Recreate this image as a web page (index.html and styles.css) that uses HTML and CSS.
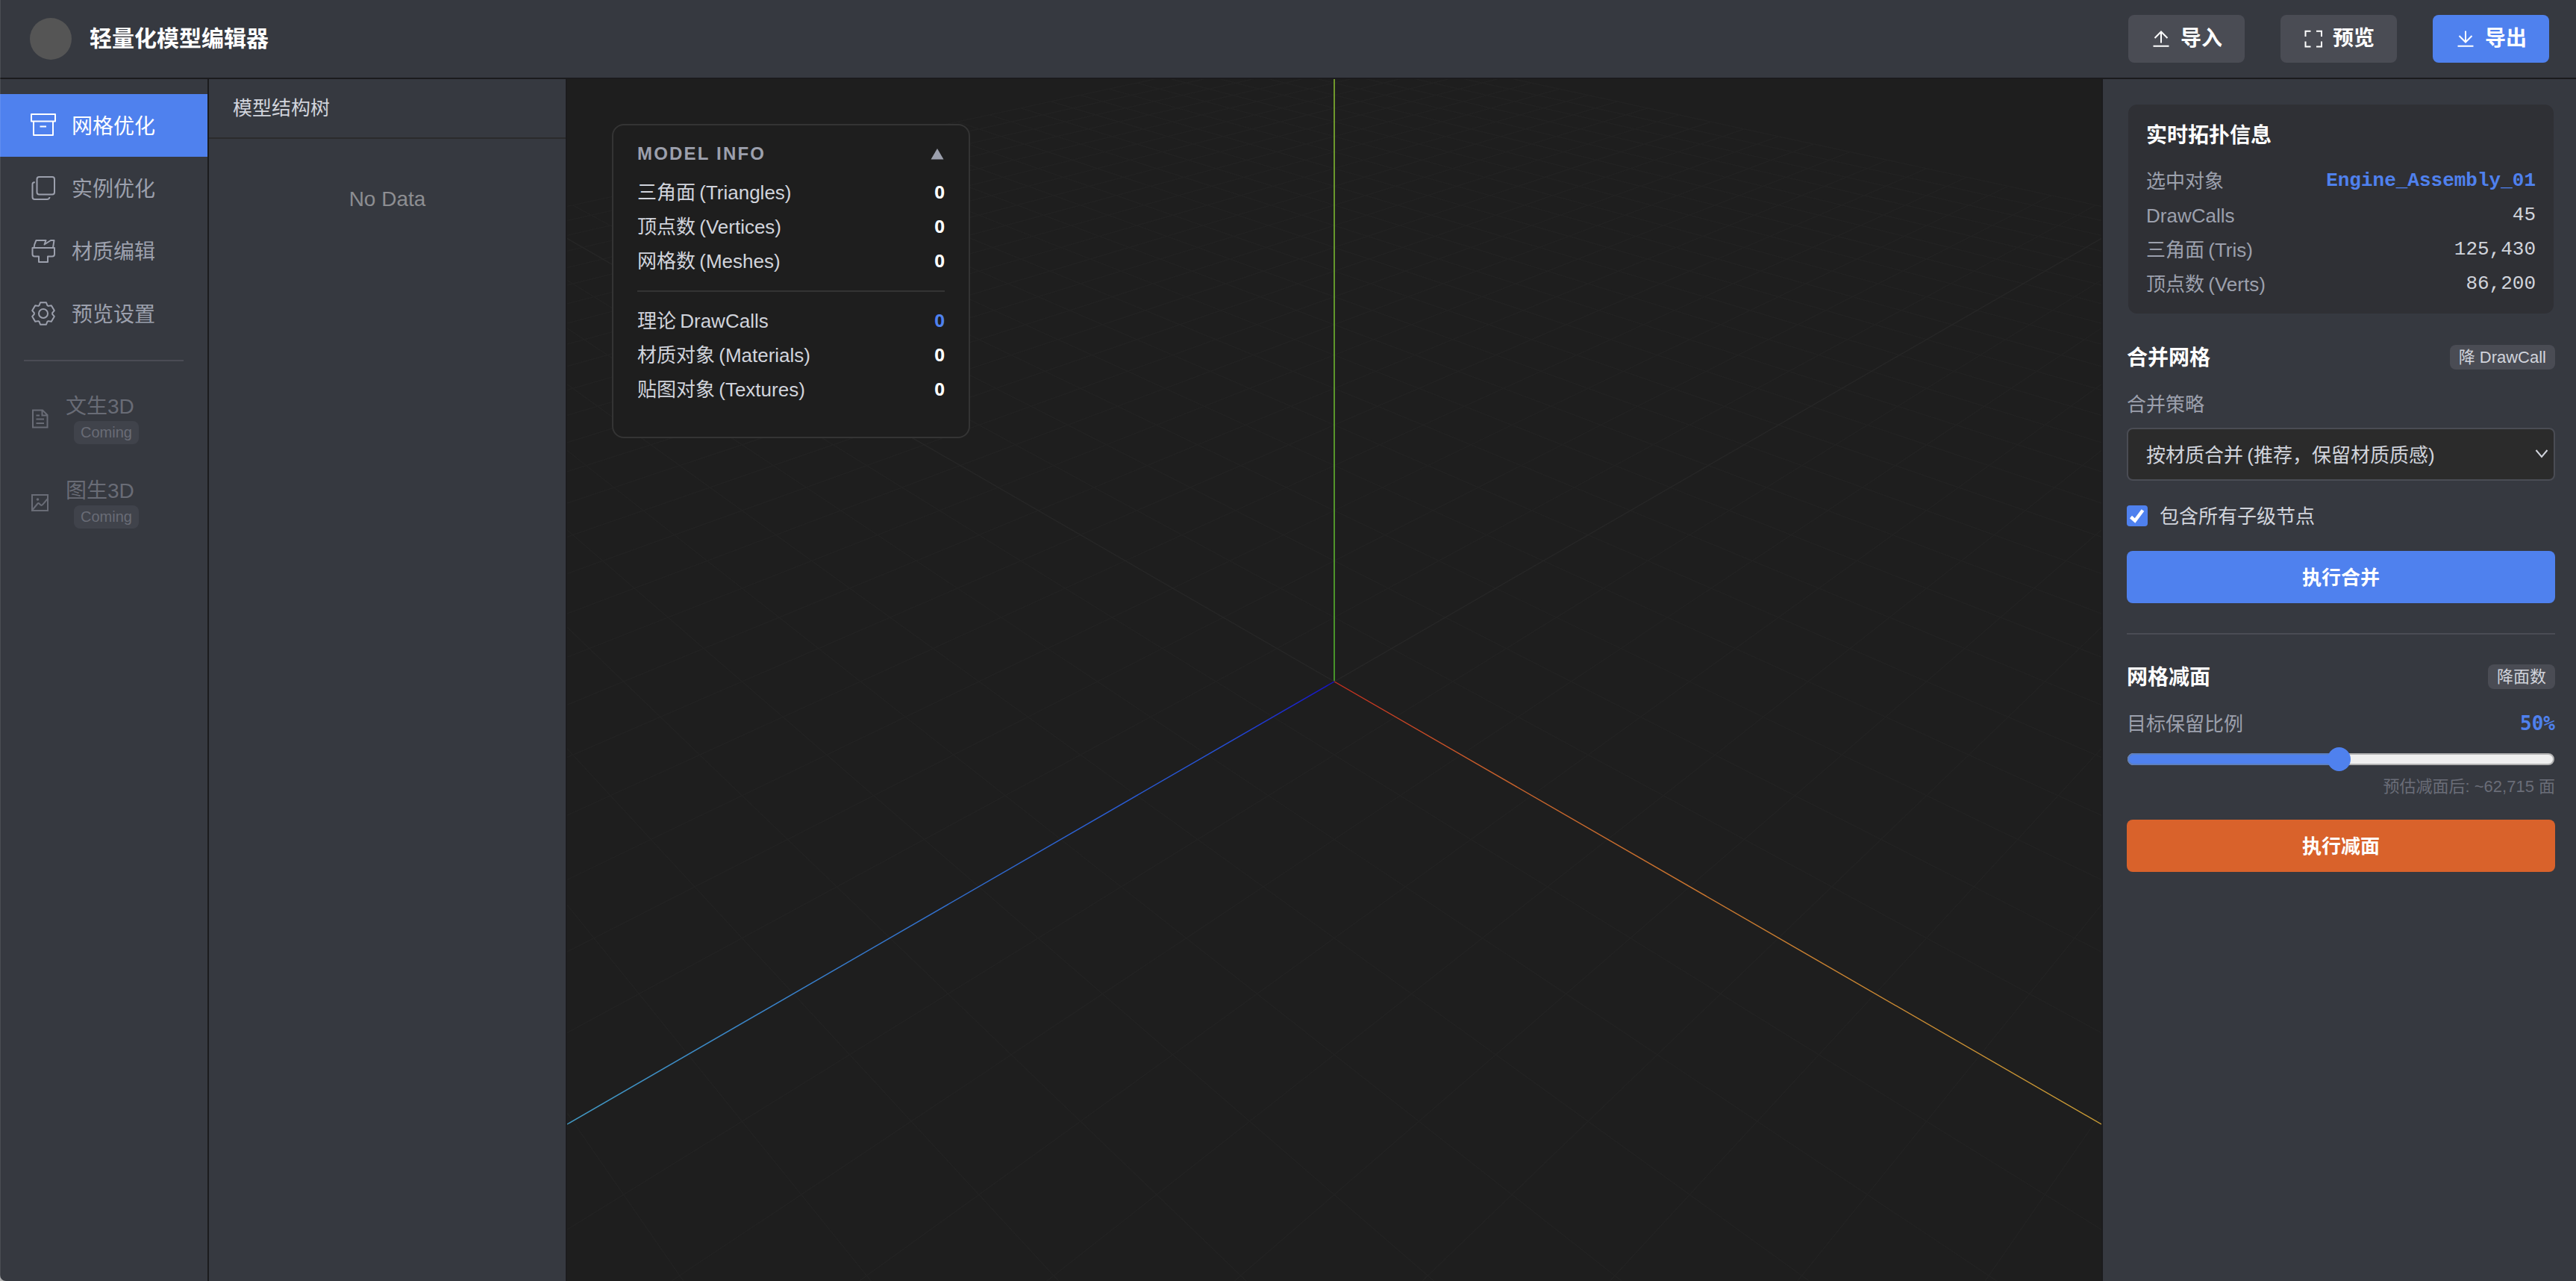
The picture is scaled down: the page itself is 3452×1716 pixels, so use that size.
FILE: index.html
```html
<!DOCTYPE html>
<html lang="zh-CN">
<head>
  <meta charset="UTF-8" />
  <meta name="viewport" content="width=device-width, initial-scale=1" />
  <title>轻量化模型编辑器</title>
  <link rel="stylesheet" href="styles.css">
</head>
<body>
  <div class="app">
    <header class="header">
      <div class="logo"></div>
      <h1 class="app-title">轻量化模型编辑器</h1>
      <div class="header-actions">
        <button class="btn">
          <svg class="icon-sm" viewBox="0 0 28 28"><path d="M3.5 23.7h21M14 4.5v15M5.5 13 14 4.5l8.5 8.5" /></svg>
          <span>导入</span>
        </button>
        <button class="btn">
          <svg class="icon-sm" viewBox="0 0 28 28"><path d="M3.5 11V3.7h7M18 3.7h7V11M25 17.5v7h-7M10.5 24.5h-7v-7" /></svg>
          <span>预览</span>
        </button>
        <button class="btn btn-primary">
          <svg class="icon-sm" viewBox="0 0 28 28"><path d="M3.5 23.7h21M14 3.5v15M5.5 10l8.5 8.5 8.5-8.5" /></svg>
          <span>导出</span>
        </button>
      </div>
    </header>

    <div class="main">
      <nav class="sidebar">
        <div class="nav-item active">
          <svg class="icon" viewBox="0 0 36 36"><path d="M2 3h32v9.5H2zM5 12.5h26V31H5zM13.500 19.5h8.500" /></svg>
          <span>网格优化</span>
        </div>
        <div class="nav-item">
          <svg class="icon" viewBox="0 0 36 36"><rect x="9.5" y="3" width="23.5" height="23.5" rx="3" /><path d="M6.8 10.2H6A2.5 2.5 0 0 0 3.5 12.7V30a3 3 0 0 0 3 3H23a3.5 3 0 0 0 3.5-3" /></svg>
          <span>实例优化</span>
        </div>
        <div class="nav-item">
          <svg class="icon" viewBox="0 0 36 36"><path d="M5.500 14C5.800 9 7 7 8.500 4H21.500L19.500 9.500 28 4h4.500L31 14M3.500 14H33v8.500a3 3 0 0 1-3 3h-6V33H12v-7.500H6.500a3 3 0 0 1-3-3z" /></svg>
          <span>材质编辑</span>
        </div>
        <div class="nav-item">
          <svg class="icon" viewBox="0 0 36 36"><path d="M14.040 3.220 21.960 3.220 23.350 7.030 24.820 7.890 28.820 7.180 32.780 14.040 30.170 17.150 30.170 18.850 32.780 21.960 28.820 28.820 24.820 28.110 23.350 28.970 21.960 32.780 14.040 32.780 12.650 28.970 11.180 28.110 7.180 28.820 3.220 21.960 5.830 18.850 5.830 17.150 3.220 14.040 7.180 7.180 11.180 7.890 12.650 7.030Z" /><circle cx="18" cy="18" r="6" /></svg>
          <span>预览设置</span>
        </div>
        <div class="nav-divider"></div>
        <div class="nav-item disabled">
          <svg class="icon-sm" viewBox="0 0 28 28"><path d="M4 2.500h13l6.500 6.500V25.500H4zM16.500 2.500v7h7M8.500 9.500h4.500M8.500 14.500h10.500M8.500 20h10.500" /></svg>
          <div class="nav-text">文生3D<span class="badge-soon">Coming</span></div>
        </div>
        <div class="nav-item disabled">
          <svg class="icon-sm" viewBox="0 0 28 28"><path d="M3 3h21v21H3zM3.500 23l7-8.500q1-1 2 0l2 2q1.500 1 2.500-.5l6.500-7.500" /><circle class="dot" cx="10.500" cy="9" r="1.800" /></svg>
          <div class="nav-text">图生3D<span class="badge-soon">Coming</span></div>
        </div>
      </nav>

      <section class="tree-panel">
        <div class="tree-header">模型结构树</div>
        <div class="tree-empty">No Data</div>
      </section>

      <section class="viewport">
        <svg class="scene" viewBox="0 0 2056 1610">
          <defs>
            <linearGradient id="axisX" gradientUnits="userSpaceOnUse" x1="1028" y1="807" x2="2056" y2="1400">
              <stop offset="0" stop-color="#cb2c1c" />
              <stop offset="0.2" stop-color="#c95f2a" />
              <stop offset="1" stop-color="#cfa034" />
            </linearGradient>
            <linearGradient id="axisZ" gradientUnits="userSpaceOnUse" x1="1028" y1="807" x2="0" y2="1400">
              <stop offset="0" stop-color="#1410c8" />
              <stop offset="0.15" stop-color="#2450d8" />
              <stop offset="1" stop-color="#419ac4" />
            </linearGradient>
            <linearGradient id="axisY" gradientUnits="userSpaceOnUse" x1="1028" y1="807" x2="1028" y2="0">
              <stop offset="0" stop-color="#45922a" />
              <stop offset="1" stop-color="#70982c" />
            </linearGradient>
          </defs>
          <g id="grid"></g>
          <path d="M1028 807 2056 1400" stroke="url(#axisX)" stroke-width="1.4" />
          <path d="M1028 807 0 1400" stroke="url(#axisZ)" stroke-width="1.4" />
          <path class="axis-y" d="M1027 0h2v806h-2z" fill="url(#axisY)" />
        </svg>

        <div class="model-info">
          <div class="model-info-title">
            <span>MODEL INFO</span>
            <svg class="caret" viewBox="0 0 18 16"><path d="M9 1 17.500 15.500H.5z" /></svg>
          </div>
          <div class="info-row"><span>三角面 (Triangles)</span><b>0</b></div>
          <div class="info-row"><span>顶点数 (Vertices)</span><b>0</b></div>
          <div class="info-row"><span>网格数 (Meshes)</span><b>0</b></div>
          <div class="info-divider"></div>
          <div class="info-row"><span>理论 DrawCalls</span><b class="highlight">0</b></div>
          <div class="info-row"><span>材质对象 (Materials)</span><b>0</b></div>
          <div class="info-row"><span>贴图对象 (Textures)</span><b>0</b></div>
        </div>
      </section>

      <aside class="props">
        <div class="topo-card">
          <h3>实时拓扑信息</h3>
          <div class="topo-row"><span>选中对象</span><code class="selected-name">Engine_Assembly_01</code></div>
          <div class="topo-row"><span>DrawCalls</span><code>45</code></div>
          <div class="topo-row"><span>三角面 (Tris)</span><code>125,430</code></div>
          <div class="topo-row"><span>顶点数 (Verts)</span><code>86,200</code></div>
        </div>

        <div class="section-title"><h3>合并网格</h3><span class="tag">降 DrawCall</span></div>
        <div class="field-label">合并策略</div>
        <div class="select">
          <span>按材质合并 (推荐，保留材质质感)</span>
          <svg class="chevron" viewBox="0 0 18 12"><path d="M1.500 1 9 10l7.500-9" /></svg>
        </div>
        <label class="check-row">
          <span class="checkbox"><svg viewBox="0 0 28 28"><path d="M5.500 15.500 11 20.500 21.500 6.500" /></svg></span>
          <span class="check-text">包含所有子级节点</span>
        </label>
        <button class="action action-merge">执行合并</button>

        <div class="section-divider"></div>

        <div class="section-title"><h3>网格减面</h3><span class="tag">降面数</span></div>
        <div class="field-label ratio-label"><span>目标保留比例</span><b class="ratio">50%</b></div>
        <div class="slider">
          <div class="slider-track"><div class="slider-fill"></div></div>
          <div class="slider-thumb"></div>
        </div>
        <div class="hint">预估减面后: ~62,715 面</div>
        <button class="action action-reduce">执行减面</button>
      </aside>
    </div>
  </div>

  <script>
    // ground grid: camera at (10,10,10), fov 45, looking at the origin
    const CX = 1028, CY = 807, F = 1944, HALF = 25;
    const grid = document.getElementById('grid');

    function project(x, z) {
      const depth = 17.3205 - (x + z) / Math.sqrt(3);
      return [
        CX + F * (x - z) / Math.SQRT2 / depth,
        CY + F * (x + z) / Math.sqrt(6) / depth
      ];
    }

    function addLine(a, b, cls) {
      const line = document.createElementNS('http://www.w3.org/2000/svg', 'line');
      line.setAttribute('x1', a[0]);
      line.setAttribute('y1', a[1]);
      line.setAttribute('x2', b[0]);
      line.setAttribute('y2', b[1]);
      line.setAttribute('class', cls);
      grid.appendChild(line);
    }

    for (let i = -HALF; i <= HALF; i++) {
      // stop in front of the camera plane
      const end = Math.min(HALF, 27 - i);
      const cls = i === 0 ? 'grid-center' : 'grid-line';
      addLine(project(i, -HALF), project(i, end), cls);
      addLine(project(-HALF, i), project(end, i), cls);
    }
  </script>
</body>
</html>
```
FILE: styles.css
```css
* {
  box-sizing: border-box;
}

body {
  margin: 0;
  background: #b0b0b0;
  color: #d1d4dc;
  font-family: "Liberation Sans", "Noto Sans CJK SC", sans-serif;
  font-size: 26px;
}

h1, h3 {
  margin: 0;
}

button {
  font-family: inherit;
  color: #fff;
  border: none;
}

svg {
  display: block;
  fill: none;
  stroke: currentColor;
  stroke-width: 2;
  flex: none;
}

.app {
  position: relative;
  display: flex;
  flex-direction: column;
  height: 100vh;
  overflow: hidden;
  background: #363940;
  border-bottom-left-radius: 8px;
}

/* window edge highlight */
.app::after {
  content: "";
  position: absolute;
  inset: 0;
  border-left: 1px solid rgba(255, 255, 255, 0.1);
  pointer-events: none;
}

.header {
  display: flex;
  align-items: center;
  height: 106px;
  padding: 0 36px 0 40px;
  border-bottom: 2px solid #1b1b1d;
}

.logo {
  width: 56px;
  height: 56px;
  margin-right: 24px;
  border-radius: 50%;
  background: #555;
}

.app-title {
  font-size: 30px;
  line-height: 40px;
  font-weight: 700;
  color: #fff;
}

.header-actions {
  display: flex;
  gap: 48px;
  margin-left: auto;
}

.btn {
  display: flex;
  align-items: center;
  gap: 12px;
  height: 64px;
  padding: 0 30px;
  border-radius: 8px;
  background: #4a4c54;
  font-size: 28px;
  line-height: 40px;
  font-weight: 700;
}

.btn-primary {
  background: #4f81ee;
}

.icon {
  width: 36px;
  height: 36px;
  stroke-linejoin: round;
}

.icon-sm {
  width: 28px;
  height: 28px;
}

.main {
  display: flex;
  flex: 1;
  min-height: 0;
}

.sidebar {
  width: 280px;
  padding-top: 20px;
  border-right: 2px solid #1b1b1d;
}

.nav-item {
  display: flex;
  align-items: center;
  gap: 20px;
  height: 84px;
  padding: 0 40px;
  font-size: 28px;
  line-height: 40px;
  color: #9ca0ad;
}

.nav-item > span {
  padding-top: 3px;
}

.nav-item.active {
  background: #4f81ee;
  color: #fff;
}

.nav-item.disabled {
  height: 113px;
  color: #696c76;
}

.nav-divider {
  height: 2px;
  margin: 20px 32px;
  background: #4a4c54;
}

.nav-text {
  display: flex;
  flex-direction: column;
  align-items: flex-start;
  line-height: 38px;
}

.badge-soon {
  height: 31px;
  margin-left: 11px;
  padding: 0 9px;
  border-radius: 8px;
  background: #40434b;
  font-size: 20px;
  line-height: 31px;
}

.dot {
  fill: currentColor;
  stroke: none;
}

.tree-panel {
  width: 480px;
  border-right: 2px solid #1b1b1d;
}

.tree-header {
  height: 80px;
  padding: 0 32px;
  border-bottom: 2px solid #2b2b2c;
  line-height: 79px;
}

.tree-empty {
  padding-top: 61px;
  text-align: center;
  font-size: 28px;
  line-height: 40px;
  color: #8d8e92;
}

.viewport {
  position: relative;
  flex: 1;
  background: #1e1e1e;
}

.scene {
  width: 2056px;
  height: 1610px;
}

.grid-line {
  stroke: #222;
  stroke-width: 1.5;
}

.grid-center {
  stroke: #262626;
  stroke-width: 1.5;
}

.axis-y {
  stroke: none;
}

.model-info {
  position: absolute;
  top: 60px;
  left: 60px;
  width: 480px;
  height: 421px;
  padding: 20px 32px;
  border: 2px solid #343434;
  border-radius: 16px;
  background: #1e1e1e;
}

.model-info-title {
  display: flex;
  align-items: center;
  justify-content: space-between;
  height: 36px;
  margin-bottom: 12px;
  padding-right: 1px;
  color: #9ca0ad;
  font-size: 24px;
  font-weight: 700;
  letter-spacing: 2.2px;
}

.caret {
  width: 18px;
  height: 16px;
  fill: currentColor;
  stroke: none;
}

.info-row {
  display: flex;
  justify-content: space-between;
  height: 46px;
  line-height: 45px;
  word-spacing: -2px;
}

.info-row b {
  font-family: "Noto Sans", sans-serif;
  font-size: 24px;
  line-height: 42px;
  color: #fff;
}

.info-row .highlight {
  color: #4f81ee;
}

.info-divider {
  height: 2px;
  margin: 15px 0 17px;
  background: #343434;
}

.props {
  width: 636px;
  padding: 34px 28px 0 32px;
  border-left: 2px solid #1b1b1d;
}

.topo-card {
  height: 280px;
  margin: 0 2px;
  padding: 22px 24px;
  border-radius: 12px;
  background: #2f3035;
}

.topo-card h3 {
  margin-bottom: 18px;
}

.props h3 {
  font-size: 28px;
  line-height: 40px;
  color: #fff;
}

.topo-row {
  display: flex;
  justify-content: space-between;
  height: 46px;
  line-height: 46px;
  color: #9ca0ad;
  word-spacing: -2px;
}

.topo-row code {
  font-family: "Liberation Mono", monospace;
  font-size: 26px;
  line-height: 44px;
  color: #d1d4dc;
}

.topo-row .selected-name {
  font-weight: 700;
  color: #4f81ee;
}

.section-title {
  display: flex;
  align-items: center;
  justify-content: space-between;
  margin-top: 38px;
}

.section-title h3 {
  height: 40px;
  line-height: 43px;
}

.tag {
  height: 33px;
  padding: 0 12px;
  border-radius: 8px;
  background: #4a4c54;
  font-size: 22px;
  line-height: 33px;
}

.field-label {
  height: 38px;
  margin-top: 24px;
  line-height: 41px;
  color: #9ca0ad;
}

.select {
  display: flex;
  align-items: center;
  justify-content: space-between;
  height: 71px;
  margin-top: 13px;
  padding: 0 7px 2px 24px;
  border: 2px solid #4a4c54;
  border-radius: 8px;
  background: #2b2b2b;
  word-spacing: -2px;
}

.chevron {
  width: 18px;
  height: 12px;
}

.check-row {
  display: flex;
  align-items: center;
  gap: 16px;
  height: 40px;
  margin-top: 27px;
}

.check-text {
  padding-bottom: 3px;
}

.checkbox {
  width: 28px;
  height: 28px;
  border-radius: 4px;
  background: #4f81ee;
  color: #fff;
}

.checkbox svg {
  stroke-width: 4.5;
}

.action {
  width: 100%;
  height: 70px;
  padding-bottom: 5px;
  border-radius: 8px;
  font-size: 26px;
  font-weight: 700;
}

.action-merge {
  margin-top: 27px;
  background: #4f81ee;
}

.action-reduce {
  margin-top: 25px;
  background: #d9622b;
}

.section-divider {
  height: 2px;
  margin-top: 40px;
  background: #4a4c54;
}

.section-divider + .section-title {
  margin-top: 36px;
}

.ratio-label {
  display: flex;
  justify-content: space-between;
}

.ratio {
  font-family: "DejaVu Sans Mono", monospace;
  line-height: 38px;
  color: #4f81ee;
}

.slider {
  position: relative;
  height: 32px;
  margin: 13px 1px 0;
  padding: 8px 0;
}

.slider-track {
  height: 16px;
  border: 2px solid #b2b2b2;
  border-radius: 8px;
  background: #efefef;
}

.slider-fill {
  width: 50%;
  height: 16px;
  margin: -2px;
  border: 2px solid #5c7fc0;
  border-radius: 8px 0 0 8px;
  background: #4f81ee;
}

.slider-thumb {
  position: absolute;
  top: 0;
  left: 268px;
  width: 31px;
  height: 32px;
  border-radius: 50%;
  background: #4f81ee;
}

.hint {
  margin-top: 3px;
  text-align: right;
  font-size: 22px;
  line-height: 36px;
  color: #6a6d78;
}

.hint + .action {
  margin-top: 26px;
}
```
